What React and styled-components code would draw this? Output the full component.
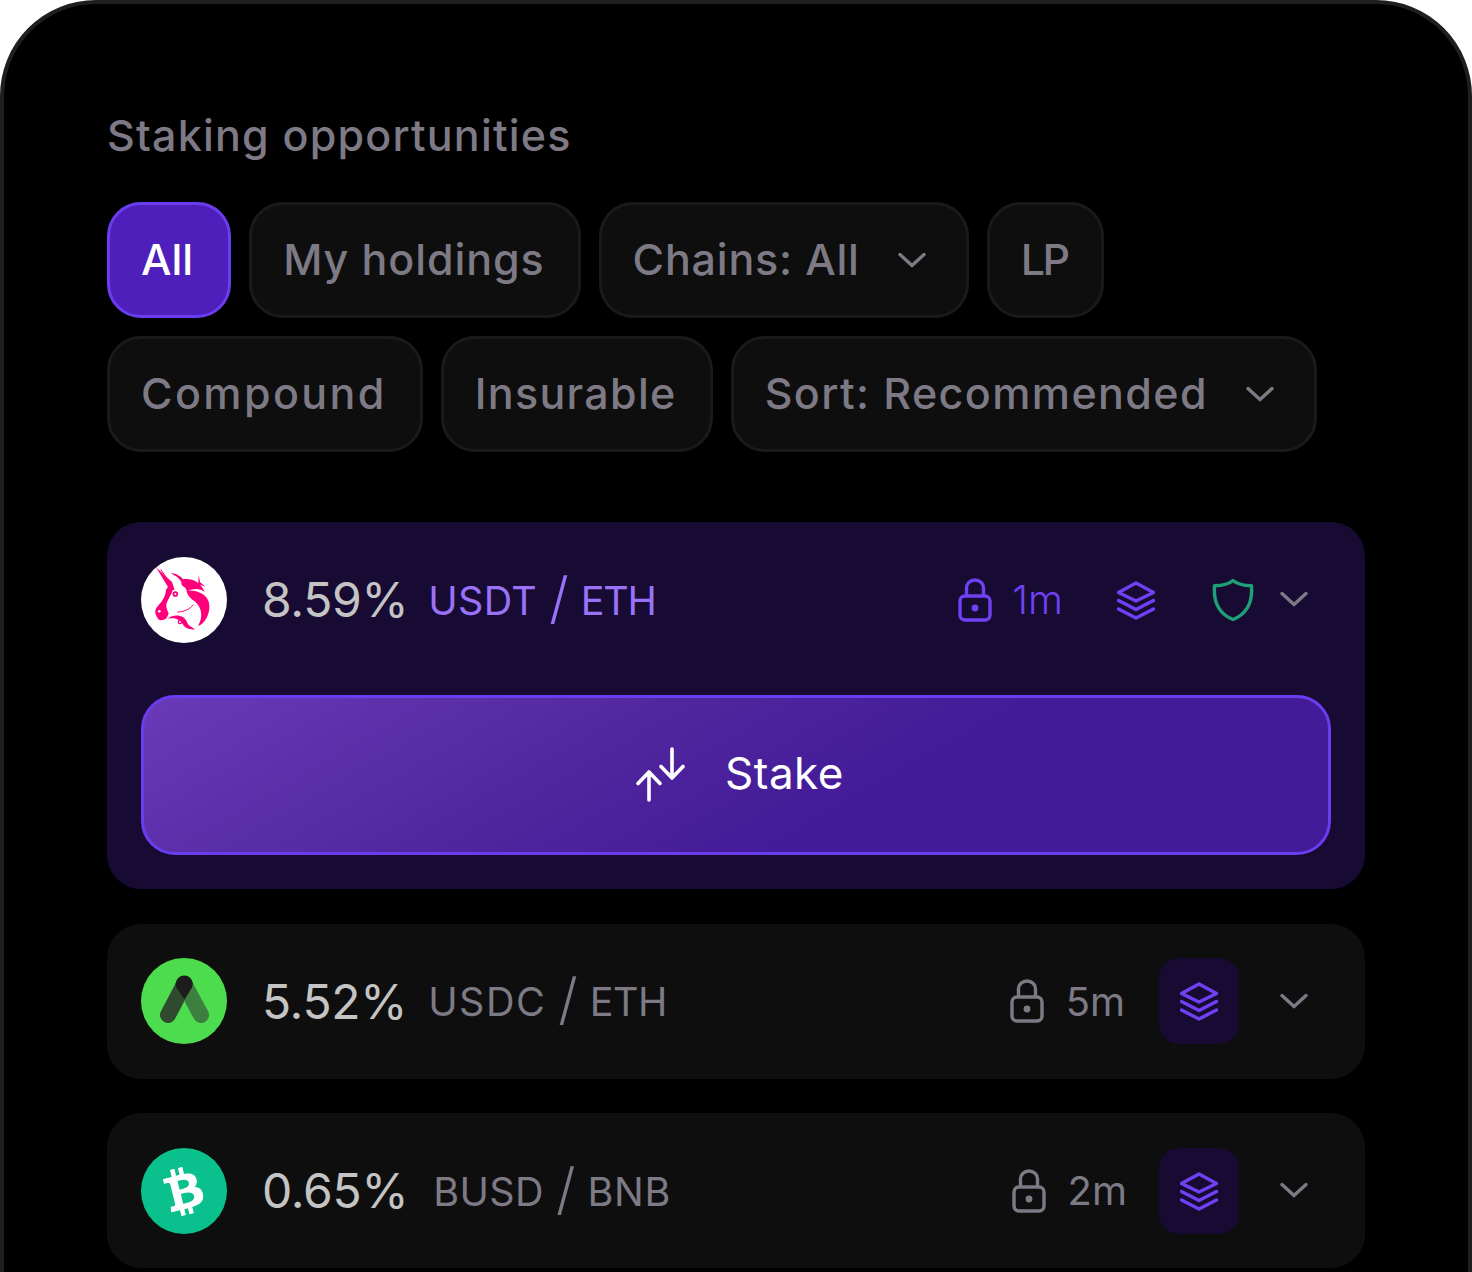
import React from 'react'
import styled, { createGlobalStyle } from 'styled-components'
import { FaBtc } from 'react-icons/fa'

const Global = createGlobalStyle`
  html, body {
    margin: 0;
    padding: 0;
    height: 1272px;
    overflow: hidden;
    background: #fff;
  }
  * {
    box-sizing: border-box;
  }
`

const Panel = styled.div`
  width: 1472px;
  height: 1400px;
  background: #000;
  border: 4px solid #1f1f1f;
  border-radius: 96px;
  padding: 105px 103px 0;
  font-family: Inter, 'Open Sans', sans-serif;
  overflow: hidden;
`

const Title = styled.h2`
  margin: 0 0 41px;
  font-size: 43px;
  line-height: 52px;
  font-weight: 500;
  letter-spacing: 1.2px;
  color: #7d7a85;
`

const Filters = styled.div`
  display: flex;
  flex-wrap: wrap;
  gap: 18px;
  width: 1240px;
`

const Chip = styled.div`
  height: 116px;
  display: flex;
  align-items: center;
  padding: 0 ${(p) => (p.$active ? 35 : 33)}px 3px 31px;
  gap: 38px;
  border-radius: 34px;
  border: 3px solid ${(p) => (p.$active ? '#6b3df0' : '#1a1a1a')};
  background: ${(p) => (p.$active ? '#4f1fbb' : '#0e0e0e')};
  color: ${(p) => (p.$active ? '#fff' : '#7d7a85')};
  font-size: 43px;
  font-weight: 500;
  letter-spacing: ${(p) => p.$track || 0}px;
`

const List = styled.div`
  display: flex;
  flex-direction: column;
  gap: 34.5px;
  margin-top: 70px;
  width: 1258px;
`

const Card = styled.div`
  border-radius: 34px;
  padding: 34.5px 34px;
  background: ${(p) => (p.$active ? '#170b33' : '#0e0e0e')};
`

const Row = styled.div`
  display: flex;
  align-items: center;
  height: 86px;
`

const Logo = styled.div`
  width: 86px;
  height: 86px;
  flex: none;
  border-radius: 50%;
  display: flex;
  align-items: center;
  justify-content: center;
  overflow: hidden;
  background: ${(p) => p.$bg};
  color: #fff;
`

const Rate = styled.div`
  margin-left: 35px;
  font-size: 48px;
  letter-spacing: -0.3px;
  color: #c4c4c4;
`

const Pair = styled.div`
  display: flex;
  align-items: center;
  gap: 12px;
  margin-left: ${(p) => p.$gap}px;
  padding-top: 2px;
  font-size: 39.5px;
  color: ${(p) => (p.$active ? '#9a72f7' : '#7d7a85')};
`

const Coin = styled.span`
  letter-spacing: ${(p) => p.$track}px;
`

const Slash = styled.span`
  font-size: 56px;
  font-weight: 300;
  margin-top: -6px;
`

const Meta = styled.div`
  margin-left: auto;
  display: flex;
  align-items: center;
  gap: ${(p) => p.$gap}px;
  color: ${(p) => (p.$active ? '#6f41f2' : '#7d7a85')};
`

const Lock = styled.div`
  display: flex;
  align-items: center;
  gap: ${(p) => (p.$active ? 19 : 21)}px;
  font-size: 40px;
  font-weight: ${(p) => (p.$active ? 300 : 400)};
`

const Badge = styled.div`
  width: 80px;
  height: 86px;
  border-radius: 20px;
  background: #170b33;
  display: flex;
  align-items: center;
  justify-content: center;
`

const Chevron = styled.svg`
  flex: none;
  margin: ${(p) => p.$top || 0}px ${(p) => p.$right || 0}px 0 ${(p) => p.$left || 0}px;
`

const ShieldSlot = styled.div`
  display: flex;
  margin-left: 56px;
`

const StakeButton = styled.div`
  margin-top: 52px;
  height: 160px;
  padding-left: 7px;
  border-radius: 34px;
  border: 3px solid #6b3df0;
  background: linear-gradient(150deg, #6a3ab8 0%, #52289f 35%, #431a98 62%, #431a98 100%);
  display: flex;
  align-items: center;
  justify-content: center;
  gap: 36px;
  color: #fff;
  font-size: 44px;
  font-weight: 400;
  letter-spacing: 0.5px;
`

const StakeLabel = styled.span`
  margin-bottom: 3px;
`

const ChevronIcon = ({ size = 28, ...rest }) => (
  <Chevron width={size} height={size * 0.58} viewBox="0 0 28 16" fill="none" {...rest}>
    <path d="M2 2.500 14 13.500 26 2.500" stroke="#7d7a85" strokeWidth="3.4" strokeLinecap="round" strokeLinejoin="round" />
  </Chevron>
)

const LockIcon = ({ color }) => (
  <svg width="36" height="44" viewBox="0 0 36 44" fill="none">
    <rect x="3" y="18" width="30" height="24" rx="5" stroke={color} strokeWidth="3.4" />
    <path d="M9.500 18V10a8.500 8 0 0 1 17 0v8" stroke={color} strokeWidth="3.4" />
    <circle cx="18" cy="30" r="3.4" fill={color} />
  </svg>
)

const LayersIcon = () => (
  <svg width="38" height="40" viewBox="0 0 38 40" fill="none" stroke="#6f41f2" strokeWidth="3.4" strokeLinecap="round" strokeLinejoin="round">
    <path d="M19 3 36.500 12.500 19 21 1.500 12.500Z" />
    <path d="M1.500 20.500 19 29.500 36.500 20.500" />
    <path d="M1.500 29 19 38 36.500 29" />
  </svg>
)

const ShieldIcon = () => (
  <svg width="44" height="44" viewBox="0 0 44 44" fill="none">
    <path d="M22 2.500C18 6 12 7.500 3.500 7.800 2.300 24 8 36 22 41.500 36 36 41.700 24 40.500 7.800 32 7.500 26 6 22 2.500Z" stroke="#1e9f76" strokeWidth="3.4" strokeLinejoin="round" />
  </svg>
)

const StakeIcon = () => (
  <svg width="54" height="58" viewBox="0 0 54 58" fill="none" stroke="#fff" strokeWidth="3.6" strokeLinecap="round" strokeLinejoin="round">
    <path d="M37 3V32M26 20.500 37 32 48 20.500" />
    <path d="M14 54V26M3 37.500 14 26 25 37.500" />
  </svg>
)

const Unicorn = () => (
  <svg width="86" height="86" viewBox="33 21 258 258">
    <g fill="#ff007a">
      <path d="M78 52 126 96 134 120 118 118Z" />
      <path d="M108 120C105 145 95 155 82 170 72 180 74 195 88 210 102 213 112 206 116 190 108 172 106 165 114 150 120 138 126 128 130 116 124 108 116 104 108 120Z" />
      <path d="M122 70C136 68 150 78 160 88 186 84 212 96 224 126 206 112 190 118 172 122 200 120 236 132 238 166 240 192 224 224 204 228 220 202 216 172 194 154 186 148 172 138 170 122 168 108 152 112 154 96 148 84 134 76 122 70Z" />
      <path d="M112 206C132 190 162 194 170 214 174 228 186 232 196 238 176 240 162 232 158 222 150 206 130 202 112 206Z" />
      <path d="M206 74 210 96 226 110 210 104 203 112 205 98Z" />
      <circle cx="136" cy="132" r="8.500" />
      <circle cx="150" cy="216" r="7" />
    </g>
    <circle cx="88" cy="184" r="4" fill="#fff" />
    <circle cx="136" cy="132" r="3" fill="#fff" />
    <circle cx="150" cy="216" r="3" fill="#fff" />
    <path d="M92 58 126 108M142 186C160 186 180 178 190 164" stroke="#ff007a" strokeWidth="3" fill="none" />
  </svg>
)

const Treasure = () => (
  <svg width="86" height="86" viewBox="0 0 86 86">
    <path d="M43.300 26 27 57" stroke="#2f4a2f" strokeWidth="16" strokeLinecap="round" />
    <path d="M43.300 26 60 57" stroke="#3c7f3f" strokeWidth="16" strokeLinecap="round" />
    <path d="M35.500 29.500A8.500 8.500 0 1 1 51 29.500L43.300 42Z" fill="#1c1c1c" />
  </svg>
)

const Btc = styled(FaBtc)`
  transform: rotate(-14deg);
`

const rows = [
  { rate: '5.52%', a: 'USDC', aTrack: 1.5, b: 'ETH', bTrack: -0.5, time: '5m', logo: <Logo $bg="#4cdc4e"><Treasure /></Logo>, gap: 21, meta: 34 },
  { rate: '0.65%', a: 'BUSD', aTrack: 0.4, b: 'BNB', bTrack: 0.7, time: '2m', logo: <Logo $bg="#0ac18e"><Btc size={48} /></Logo>, gap: 25, meta: 32 },
]

const App = () => {
  return (
    <Panel>
      <Global />
      <Title>Staking opportunities</Title>
      <Filters>
        <Chip $active>All</Chip>
        <Chip $track={0.9}>My holdings</Chip>
        <Chip $track={0.8}>Chains: All<ChevronIcon $right={7} $top={4} /></Chip>
        <Chip $track={-2.5}>LP</Chip>
        <Chip $track={2.4}>Compound</Chip>
        <Chip $track={1.3}>Insurable</Chip>
        <Chip $track={1.4}>Sort: Recommended<ChevronIcon $right={7} $top={4} /></Chip>
      </Filters>
      <List>
        <Card $active>
          <Row>
            <Logo $bg="#fff"><Unicorn /></Logo>
            <Rate>8.59%</Rate>
            <Pair $active $gap={20}>
              <Coin $track={0.3}>USDT</Coin>
              <Slash>/</Slash>
              <Coin $track={-1.2}>ETH</Coin>
            </Pair>
            <Meta $active $gap={54}>
              <Lock $active><LockIcon color="#6f41f2" />1m</Lock>
              <LayersIcon />
            </Meta>
            <ShieldSlot><ShieldIcon /></ShieldSlot>
            <ChevronIcon $left={25} $right={23} />
          </Row>
          <StakeButton><StakeIcon /><StakeLabel>Stake</StakeLabel></StakeButton>
        </Card>
        {rows.map((r) => (
          <Card key={r.a}>
            <Row>
              {r.logo}
              <Rate>{r.rate}</Rate>
              <Pair $gap={r.gap}>
                <Coin $track={r.aTrack}>{r.a}</Coin>
                <Slash>/</Slash>
                <Coin $track={r.bTrack}>{r.b}</Coin>
              </Pair>
              <Meta $gap={r.meta}>
                <Lock><LockIcon color="#7d7a85" />{r.time}</Lock>
                <Badge><LayersIcon /></Badge>
              </Meta>
              <ChevronIcon $left={41} $right={23} />
            </Row>
          </Card>
        ))}
      </List>
    </Panel>
  )
}

export default App
